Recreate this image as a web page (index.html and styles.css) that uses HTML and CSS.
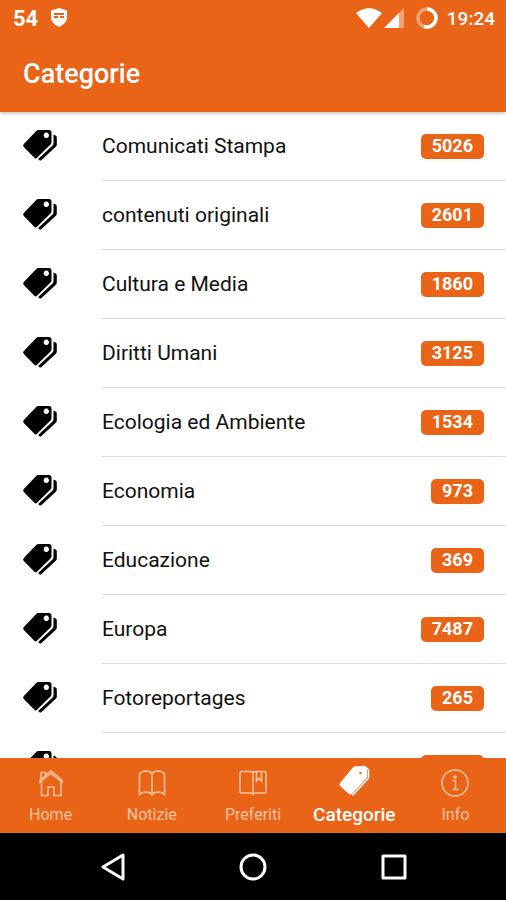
FILE: index.html
```html
<!DOCTYPE html>
<html lang="it">
<head>
<meta charset="UTF-8">
<meta name="viewport" content="width=device-width, initial-scale=1.0">
<title>Categorie</title>
<link rel="stylesheet" href="styles.css">
</head>
<body>
<svg class="symbols" aria-hidden="true">
    <symbol id="tags" viewBox="0 0 36 34">
        <path fill-rule="evenodd" d="M1.8 16 14 3.200Q15 2 16.500 2H27Q29.5 2 29.5 4.500V14.2Q29.5 15.6 28.5 16.6L15 29.8Q13.700 31 12.400 29.8L1.8 19Q.4 17.500 1.800 16ZM24.300 4.600a2.700 2.700 0 1 0 .01 0Z"/>
        <path d="M31.500 6.500 33.600 7.500Q34.800 8.200 34.800 9.500V16.500Q34.800 17.800 33.800 18.800L19.500 32Q18.300 33 17.200 32L16.200 31 30.500 17.500Q31.500 16.500 31.500 15Z"/>
    </symbol>
</svg>

<header class="header">
    <div class="status">
        <span class="status-count">54</span>
        <svg class="shield" width="18" height="20" viewBox="0 0 18 20">
            <path fill="#fff" d="M9 0 17 2.500V10Q16.500 15.500 9 19 1.500 15.500 1 10V2.500Z"/>
            <path fill="#ea6418" d="M4 5h10v2H4zM4 8h4v2H4zM10 8h4v2h-4z"/>
        </svg>
        <div class="status-right">
            <svg width="26" height="20" viewBox="0 0 26 20"><path fill="#fff" d="M0 5Q13-4.500 26 5L13 20Z"/></svg>
            <svg width="20" height="20" viewBox="0 0 20 20">
                <path fill="#fff" opacity=".4" d="M20 0V20H14V6Z"/>
                <path fill="#fff" d="M15 5V20H0Z"/>
            </svg>
            <svg class="ring" width="24" height="24" viewBox="0 0 24 24" fill="none" stroke="#fff" stroke-width="3.500">
                <circle cx="12" cy="12" r="9" opacity=".4"/>
                <path d="M12 3A9 9 0 1 1 9 20.500"/>
            </svg>
            <span class="clock">19:24</span>
        </div>
    </div>
    <h1>Categorie</h1>
</header>

<main class="content">
    <ul class="list">
        <li><svg class="tags"><use href="#tags"/></svg><div class="row"><span>Comunicati Stampa</span><span class="badge">5026</span></div></li>
        <li><svg class="tags"><use href="#tags"/></svg><div class="row"><span>contenuti originali</span><span class="badge">2601</span></div></li>
        <li><svg class="tags"><use href="#tags"/></svg><div class="row"><span>Cultura e Media</span><span class="badge">1860</span></div></li>
        <li><svg class="tags"><use href="#tags"/></svg><div class="row"><span>Diritti Umani</span><span class="badge">3125</span></div></li>
        <li><svg class="tags"><use href="#tags"/></svg><div class="row"><span>Ecologia ed Ambiente</span><span class="badge">1534</span></div></li>
        <li><svg class="tags"><use href="#tags"/></svg><div class="row"><span>Economia</span><span class="badge">973</span></div></li>
        <li><svg class="tags"><use href="#tags"/></svg><div class="row"><span>Educazione</span><span class="badge">369</span></div></li>
        <li><svg class="tags"><use href="#tags"/></svg><div class="row"><span>Europa</span><span class="badge">7487</span></div></li>
        <li><svg class="tags"><use href="#tags"/></svg><div class="row"><span>Fotoreportages</span><span class="badge">265</span></div></li>
        <li><svg class="tags"><use href="#tags"/></svg><div class="row"><span>Internazionale</span><span class="badge">2866</span></div></li>
    </ul>
</main>

<nav class="tabs">
    <button class="tab" type="button">
        <svg width="28" height="28" viewBox="0 0 28 28">
            <path d="M3 13 14 4.500 25 13V11L14 2 3 11ZM4 10V3.500H8.500V6.500M4.500 12.500V26.500H11V18H17V26.500H24V12.500"/>
        </svg>
        Home
    </button>
    <button class="tab" type="button">
        <svg width="28" height="28" viewBox="0 0 28 28">
            <path d="M14 5Q12.500 2 8.500 2 4 2 1.500 5V25.500Q4 23 8 23 12.500 23 14 26 15.500 23 20 23 24 23 26.500 25.500V5Q24 2 19.500 2 15.500 2 14 5V26"/>
        </svg>
        Notizie
    </button>
    <button class="tab" type="button">
        <svg width="28" height="28" viewBox="0 0 28 28">
            <path d="M14 3.500Q13 2.500 11 2.500H3Q1 2.500 1 4.500V22Q1 24 3 24H12Q13.500 24 14 26 14.500 24 16 24H25Q27 24 27 22V4.500Q27 2.500 25 2.500H17Q15 2.500 14 3.500V26M17.500 2.500V12L20 9.500 22.500 12V2.500"/>
        </svg>
        Preferiti
    </button>
    <button class="tab active" type="button">
        <svg width="32" height="32" viewBox="0 0 32 32">
            <path fill-rule="evenodd" class="solid" d="M3 18 15 3.500Q16 2.200 18 2L26 1.500Q28 1.500 28.200 3.500L28.500 10Q28.500 11.500 27.500 13L14 28Q12.500 29.500 11 28L3 21Q1.500 19.500 3 18ZM22.500 6a2 2 0 1 0 .01 0Z"/>
            <path d="M28 2.500 30.500 5V13L14.500 30.500"/>
        </svg>
        Categorie
    </button>
    <button class="tab" type="button">
        <svg width="28" height="28" viewBox="0 0 28 28">
            <circle cx="14" cy="14" r="13"/>
            <path d="M11.500 11.500H14.500V20M11.500 20.500H17.500"/>
            <circle class="solid" cx="14" cy="8" r="1"/>
        </svg>
        Info
    </button>
</nav>

<footer class="navbar">
    <button type="button" aria-label="Indietro"><svg width="28" height="28" viewBox="0 0 28 28"><path d="M25 2V26L5 14Z"/></svg></button>
    <button type="button" aria-label="Home"><svg width="28" height="28" viewBox="0 0 28 28"><circle cx="14" cy="14" r="12"/></svg></button>
    <button type="button" aria-label="Recenti"><svg width="28" height="28" viewBox="0 0 28 28"><path d="M3 3H25V25H3Z"/></svg></button>
</footer>
</body>
</html>
```

FILE: styles.css
```css
* {
    box-sizing: border-box;
}
body {
    display: flex;
    flex-direction: column;
    height: 100vh;
    margin: 0;
    font-family: Roboto, "Liberation Sans", sans-serif;
    background-color: #fff;
    color: #111;
}
button {
    padding: 0;
    border: none;
    background: none;
    font-family: inherit;
    cursor: pointer;
}
.symbols {
    position: absolute;
    width: 0;
    height: 0;
}
.header {
    flex: none;
    z-index: 1;
    background-color: #ea6418;
    color: #fff;
    box-shadow: 0 1px 4px rgba(0, 0, 0, 0.3);
}
.status {
    display: flex;
    align-items: center;
    height: 36px;
    padding: 0 11px 0 13px;
}
.status-count {
    font-size: 22px;
    font-weight: 700;
}
.shield {
    margin-left: 12px;
}
.status-right {
    display: flex;
    align-items: center;
    gap: 2px;
    margin-left: auto;
}
.ring {
    margin-left: 9px;
}
.clock {
    margin-left: 6px;
    font-size: 19px;
    font-weight: 500;
}
h1 {
    margin: 0;
    padding: 0 23px;
    font-size: 27px;
    font-weight: 500;
    line-height: 76px;
}
.content {
    flex: 1;
    min-height: 0;
    overflow: hidden;
}
.list {
    margin: 0;
    padding: 0;
    list-style: none;
}
.list li {
    display: flex;
    align-items: center;
    height: 69px;
    padding-left: 22px;
}
.tags {
    flex: none;
    width: 36px;
    height: 34px;
    margin: 0 44px 4px 0;
    fill: #000;
}
.row {
    display: flex;
    flex: 1;
    align-items: center;
    justify-content: space-between;
    height: 100%;
    padding-right: 22px;
    border-bottom: 1px solid #dcdcdc;
    font-size: 21px;
}
.badge {
    padding: 0 11px 2px;
    border-radius: 5px;
    background-color: #ea6418;
    color: #fff;
    font-size: 18px;
    font-weight: 700;
    line-height: 23px;
}
.tabs {
    display: flex;
    flex: none;
    height: 75px;
    background-color: #ea6418;
}
.tab {
    display: flex;
    flex: 1;
    flex-direction: column;
    align-items: center;
    justify-content: flex-end;
    gap: 7px;
    padding-bottom: 7px;
    color: #fbc4a0;
    font-size: 16px;
    line-height: 22px;
}
.tab svg {
    fill: none;
    stroke: currentColor;
    stroke-width: 1.5;
}
.tab .solid {
    fill: currentColor;
}
.tab.active {
    color: #fff;
    font-size: 19px;
    font-weight: 500;
}
.navbar {
    display: flex;
    flex: none;
    align-items: center;
    justify-content: space-between;
    height: 67px;
    padding: 0 98px;
    background-color: #000;
}
.navbar svg {
    display: block;
    fill: none;
    stroke: #fff;
    stroke-width: 3;
    stroke-linejoin: round;
}
```
